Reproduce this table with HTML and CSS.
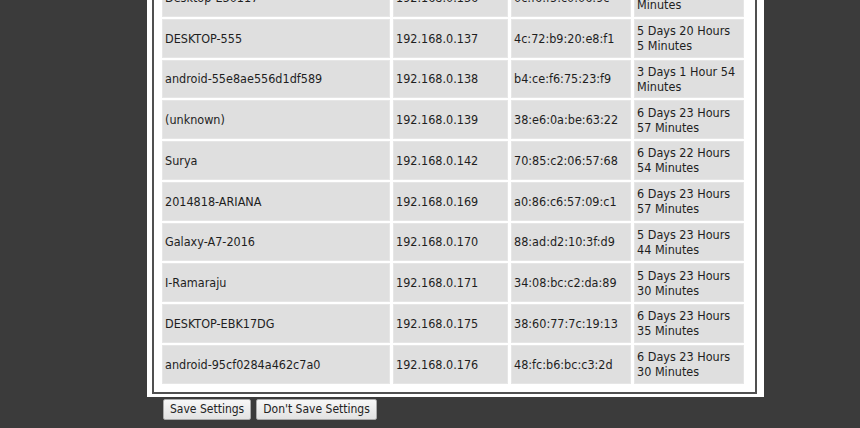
FILE: index.html
```html
<!DOCTYPE html>
<html lang="en">
<head>
  <meta charset="UTF-8" />
  <title>DHCP Clients</title>
  <link rel="stylesheet" href="styles.css">
</head>
<body>
  <div class="page">
    <div class="client-box">
      <table class="client-table">
        <tr>
          <td class="c-name">Desktop-E30117</td>
          <td class="c-ip">192.168.0.136</td>
          <td class="c-mac">0c:f6:f5:c0:06:9c</td>
          <td class="c-time">6 Days 1 Hour 12<br>Minutes</td>
        </tr>
        <tr>
          <td>DESKTOP-555</td>
          <td>192.168.0.137</td>
          <td>4c:72:b9:20:e8:f1</td>
          <td>5 Days 20 Hours<br>5 Minutes</td>
        </tr>
        <tr>
          <td>android-55e8ae556d1df589</td>
          <td>192.168.0.138</td>
          <td>b4:ce:f6:75:23:f9</td>
          <td>3 Days 1 Hour 54<br>Minutes</td>
        </tr>
        <tr>
          <td>(unknown)</td>
          <td>192.168.0.139</td>
          <td>38:e6:0a:be:63:22</td>
          <td>6 Days 23 Hours<br>57 Minutes</td>
        </tr>
        <tr>
          <td>Surya</td>
          <td>192.168.0.142</td>
          <td>70:85:c2:06:57:68</td>
          <td>6 Days 22 Hours<br>54 Minutes</td>
        </tr>
        <tr>
          <td>2014818-ARIANA</td>
          <td>192.168.0.169</td>
          <td>a0:86:c6:57:09:c1</td>
          <td>6 Days 23 Hours<br>57 Minutes</td>
        </tr>
        <tr>
          <td>Galaxy-A7-2016</td>
          <td>192.168.0.170</td>
          <td>88:ad:d2:10:3f:d9</td>
          <td>5 Days 23 Hours<br>44 Minutes</td>
        </tr>
        <tr>
          <td>I-Ramaraju</td>
          <td>192.168.0.171</td>
          <td>34:08:bc:c2:da:89</td>
          <td>5 Days 23 Hours<br>30 Minutes</td>
        </tr>
        <tr>
          <td>DESKTOP-EBK17DG</td>
          <td>192.168.0.175</td>
          <td>38:60:77:7c:19:13</td>
          <td>6 Days 23 Hours<br>35 Minutes</td>
        </tr>
        <tr>
          <td>android-95cf0284a462c7a0</td>
          <td>192.168.0.176</td>
          <td>48:fc:b6:bc:c3:2d</td>
          <td>6 Days 23 Hours<br>30 Minutes</td>
        </tr>
      </table>
    </div>

    <div class="actions">
      <button type="button">Save Settings</button>
      <button type="button">Don't Save Settings</button>
    </div>
  </div>
</body>
</html>
```

FILE: styles.css
```css
* {
  box-sizing: border-box;
  margin: 0;
  padding: 0;
}

html, body {
  height: 100%;
  overflow: hidden;
}

body {
  background-color: #3b3b3b;
  font-family: "DejaVu Sans Condensed", "DejaVu Sans", sans-serif;
  font-size: 12.5px;
  color: #1e1e1e;
}

.page {
  width: 617px;
  height: 100%;
  margin-left: 147px;
  background: #fff;
  padding: 0 7px 0 5px;
}

.client-box {
  margin-top: -31px;
  border: 2px solid #505050;
  padding: 5px 8px 6px 5px;
}

.client-table {
  table-layout: fixed;
  width: 588px;
  border-spacing: 3px 2px;
  background: #fff;
}

.client-table td {
  height: 38.75px;
  padding: 0 3px;
  background: #dfdfdf;
  box-shadow: inset 0 0 0 1px #e6e6e6;
  line-height: 15px;
  vertical-align: middle;
  white-space: nowrap;
}

.client-table .c-name { width: 228px; }
.client-table .c-ip { width: 115px; }
.client-table .c-mac { width: 120px; }
.client-table .c-time { width: 110px; }

.actions {
  display: flex;
  gap: 5px;
  margin-top: 5px;
  padding-left: 11px;
}

.actions button {
  height: 21px;
  padding: 0 6px;
  font-family: "DejaVu Sans Condensed", "DejaVu Sans", sans-serif;
  font-size: 12px;
  color: #222;
  background: linear-gradient(#f7f7f7, #e2e2e2);
  border: 1px solid #a9a9a9;
  border-radius: 2px;
}
```
